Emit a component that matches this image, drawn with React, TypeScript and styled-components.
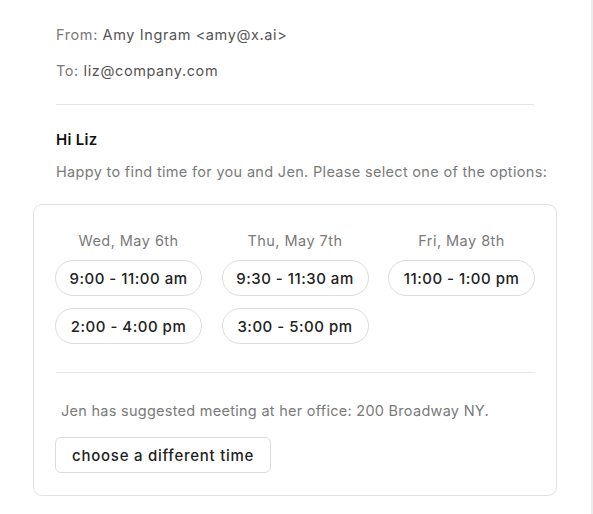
import React, { FC } from 'react';
import styled, { createGlobalStyle } from 'styled-components';

const GlobalStyle = createGlobalStyle`
  html, body {
    margin: 0;
    padding: 0;
    background: #ffffff;
  }
  body {
    font-family: Inter, 'DejaVu Sans', sans-serif;
    -webkit-font-smoothing: antialiased;
  }
`;

const Page = styled.div`
  width: 591px;
  min-height: 514px;
  border-right: 2px solid #ededed;
  box-sizing: content-box;
  padding-top: 25px;
`;

const Header = styled.div`
  padding: 0 20px 0 56px;
`;

const MetaLine = styled.div`
  font-size: 14.5px;
  line-height: 20px;
  color: #7a7a7a;
  margin-bottom: 16px;
  letter-spacing: 0.6px;
`;

const MetaValue = styled.span`
  color: #555555;
`;

const Rule = styled.hr`
  border: 0;
  border-top: 1px solid #e6e6e6;
  margin: 23px 37px 0 0;
`;

const Greeting = styled.div`
  margin-top: 25px;
  font-size: 15px;
  line-height: 20px;
  font-weight: 600;
  color: #111111;
  letter-spacing: 0.3px;
`;

const Intro = styled.div`
  margin-top: 12px;
  font-size: 14.5px;
  line-height: 20px;
  color: #7a7a7a;
  letter-spacing: 0.32px;
  white-space: nowrap;
`;

const Card = styled.div`
  margin: 22px 0 0 33px;
  width: 524px;
  box-sizing: border-box;
  border: 1px solid #e2e2e2;
  border-radius: 9px;
  padding: 26px 21px 22px;
`;

const Days = styled.div`
  display: grid;
  grid-template-columns: repeat(3, 147px);
  column-gap: 19.5px;
`;

const Day = styled.div`
  display: flex;
  flex-direction: column;
  gap: 12px;
`;

const DayLabel = styled.div`
  text-align: center;
  font-size: 14.5px;
  line-height: 20px;
  color: #7a7a7a;
  letter-spacing: 0.45px;
  margin-bottom: -3px;
`;

const Slot = styled.button`
  height: 36px;
  border: 1px solid #dcdcdc;
  border-radius: 18px;
  background: #ffffff;
  font-family: inherit;
  font-size: 15px;
  font-weight: 500;
  color: #222222;
  cursor: pointer;
  padding: 0;
  letter-spacing: 0.5px;
`;

const CardRule = styled.hr`
  border: 0;
  border-top: 1px solid #e6e6e6;
  margin: 28px 0 0 1px;
`;

const Note = styled.div`
  margin: 29px 0 0 6px;
  font-size: 14.5px;
  line-height: 18px;
  color: #7a7a7a;
  letter-spacing: 0.27px;
`;

const OtherButton = styled.button`
  margin-top: 17px;
  height: 36px;
  padding: 0 16px;
  border: 1px solid #dcdcdc;
  border-radius: 6px;
  background: #ffffff;
  font-family: inherit;
  font-size: 15px;
  font-weight: 500;
  color: #222222;
  cursor: pointer;
  letter-spacing: 0.75px;
`;

interface DayOption {
  label: string;
  slots: string[];
}

const days: DayOption[] = [
  { label: 'Wed, May 6th', slots: ['9:00 - 11:00 am', '2:00 - 4:00 pm'] },
  { label: 'Thu, May 7th', slots: ['9:30 - 11:30 am', '3:00 - 5:00 pm'] },
  { label: 'Fri, May 8th', slots: ['11:00 - 1:00 pm'] },
];

const App: FC = () => (
  <>
    <GlobalStyle />
    <Page>
      <Header>
        <MetaLine>
          From: <MetaValue>Amy Ingram &lt;amy@x.ai&gt;</MetaValue>
        </MetaLine>
        <MetaLine>
          To: <MetaValue>liz@company.com</MetaValue>
        </MetaLine>
        <Rule />
        <Greeting>Hi Liz</Greeting>
        <Intro>Happy to find time for you and Jen. Please select one of the options:</Intro>
      </Header>
      <Card>
        <Days>
          {days.map((day) => (
            <Day key={day.label}>
              <DayLabel>{day.label}</DayLabel>
              {day.slots.map((slot) => (
                <Slot key={slot}>{slot}</Slot>
              ))}
            </Day>
          ))}
        </Days>
        <CardRule />
        <Note>Jen has suggested meeting at her office: 200 Broadway NY.</Note>
        <OtherButton>choose a different time</OtherButton>
      </Card>
    </Page>
  </>
);

export default App;
